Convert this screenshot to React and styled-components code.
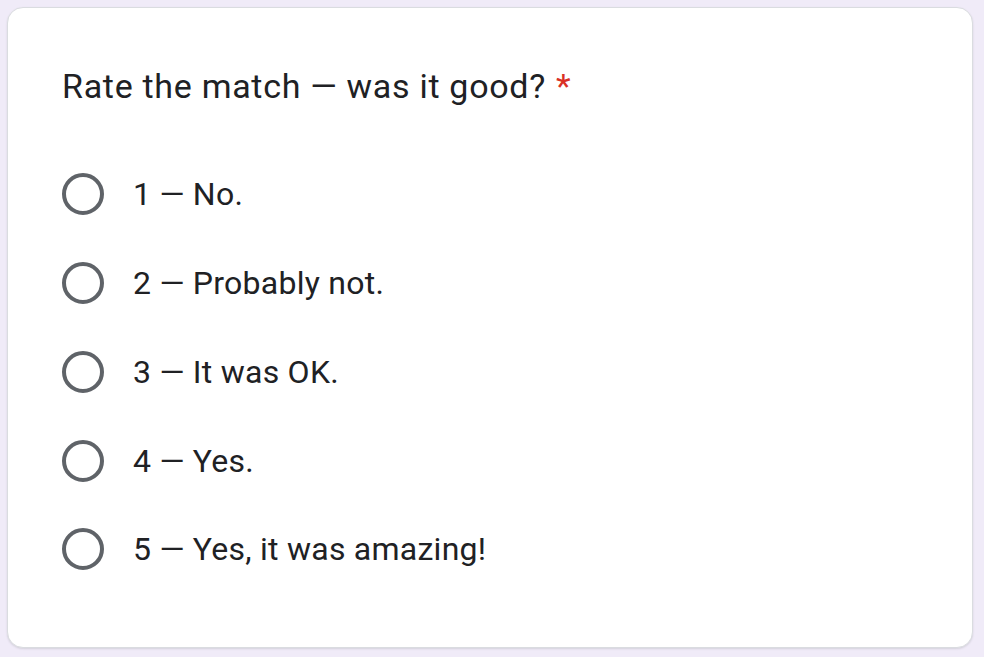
import React from "react";
import styled, { createGlobalStyle } from "styled-components";

const Global = createGlobalStyle`
  html, body { margin: 0; padding: 0; background: #f0ebf8; }
  body { font-family: Roboto, "Noto Sans", Arial, sans-serif; }
`;

const Page = styled.div`
  padding: 7px 11px 9px 7px;
`;

const Card = styled.div`
  background: #fff;
  border: 1px solid #dadce0;
  border-radius: 16px;
  box-shadow: 0 1px 2px rgba(60, 64, 67, 0.15);
  height: 641px;
  box-sizing: border-box;
  padding: 54px 54px 0 54px;
`;

const Title = styled.div`
  font-size: 34px;
  color: #202124;
  line-height: 48px;
  letter-spacing: 0.7px;
  margin-bottom: 40px;
`;

const Star = styled.span`
  color: #d93025;
  margin-left: 10px;
`;

const List = styled.div`
  display: flex;
  flex-direction: column;
`;

const Row = styled.label`
  display: flex;
  align-items: center;
  height: 88.75px;
  gap: 29px;
`;

const Radio = styled.span`
  width: 42px;
  height: 42px;
  box-sizing: border-box;
  border: 4px solid #5f6368;
  border-radius: 50%;
  flex: none;
`;

const Label = styled.span`
  font-size: 32px;
  letter-spacing: 0.25px;
  color: #202124;
`;

const options = [
  "1 — No.",
  "2 — Probably not.",
  "3 — It was OK.",
  "4 — Yes.",
  "5 — Yes, it was amazing!",
];

export default function App() {
  return (
    <>
      <Global />
      <Page>
        <Card>
          <Title>
            Rate the match — was it good?<Star>*</Star>
          </Title>
          <List>
            {options.map((o) => (
              <Row key={o}>
                <Radio />
                <Label>{o}</Label>
              </Row>
            ))}
          </List>
        </Card>
      </Page>
    </>
  );
}
